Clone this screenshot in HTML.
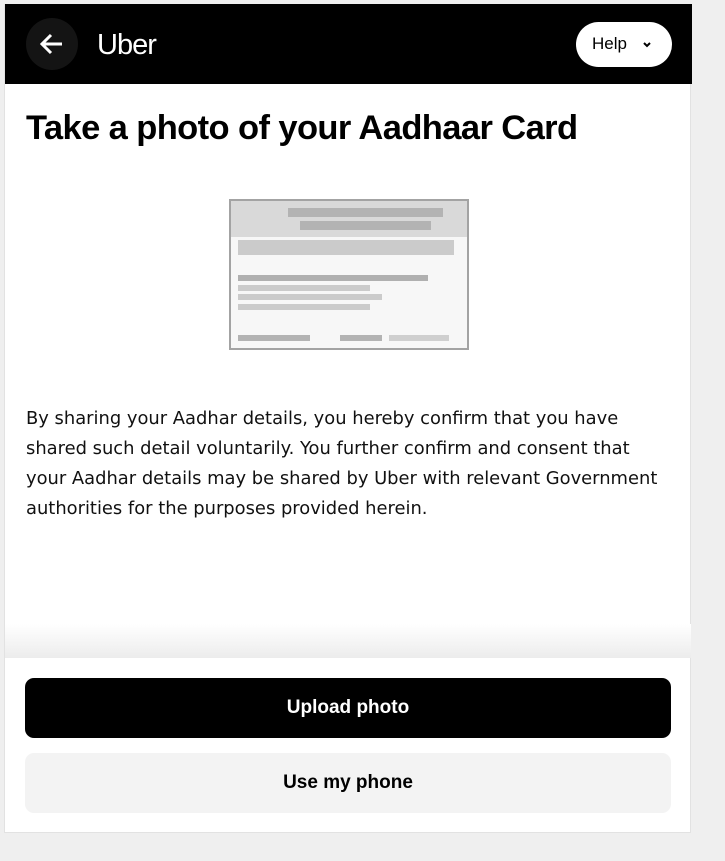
<!DOCTYPE html>
<html><head><meta charset="utf-8"><style>
*{margin:0;padding:0;box-sizing:border-box}
body{width:725px;height:861px;background:#efefef;font-family:"Liberation Sans",sans-serif;position:relative;overflow:hidden}
.wrap{position:absolute;left:4px;top:4px;width:687px;height:829px;background:#fff;border:1px solid #e2e2e2;border-top:none}
.hdr{position:absolute;left:0;top:0;width:687px;height:80px;background:#000}
.back{position:absolute;left:21px;top:14px;width:52px;height:52px;border-radius:50%;background:#141414}
.logo{position:absolute;left:92px;top:25px;color:#fff;font-size:29px;letter-spacing:-1px}
.help{position:absolute;left:571px;top:18px;width:96px;height:45px;border-radius:23px;background:#fff;font-size:17px;color:#000;padding:12px 0 0 16px}
h1{position:absolute;left:21px;top:105px;font-size:34.5px;font-weight:bold;letter-spacing:-0.6px;color:#000}
.p{position:absolute;left:21px;top:400px;width:640px;line-height:30px;color:#111;font-family:"DejaVu Sans","Liberation Sans",sans-serif;font-size:17.9px}
.b{position:absolute}
.shadow{position:absolute;left:0;top:620px;width:686px;height:34px;background:linear-gradient(#fff,#ececec)}
.btn{position:absolute;left:20px;width:646px;height:60px;border-radius:9px;text-align:center;line-height:60px;font-size:19px;font-weight:bold}
</style></head><body>
<div class="wrap">
<div class="hdr">
<div class="back"><svg width="52" height="52" viewBox="0 0 52 52"><path d="M36 26H16M25 17l-9 9 9 9" stroke="#fff" stroke-width="3" fill="none"/></svg></div>
<div class="logo">Uber</div>
<div class="help">Help <svg width="10" height="8" viewBox="0 0 10 8" style="margin-left:10px"><path d="M2 2l3 3 3-3" stroke="#000" stroke-width="2" fill="none"/></svg></div>
</div>
<h1>Take a photo of your Aadhaar Card</h1>
<div class="b" style="left:224px;top:195px;width:240px;height:151px;border:2px solid #a3a3a3;background:#f7f7f7"></div>
<div class="b" style="left:226px;top:197px;width:236px;height:36px;background:#d9d9d9"></div>
<div class="b" style="left:283px;top:204px;width:155px;height:9px;background:#b3b3b3"></div>
<div class="b" style="left:295px;top:217px;width:131px;height:9px;background:#b3b3b3"></div>
<div class="b" style="left:233px;top:236px;width:216px;height:15px;background:#cbcbcb"></div>
<div class="b" style="left:233px;top:271px;width:190px;height:6px;background:#b0b0b0"></div>
<div class="b" style="left:233px;top:281px;width:132px;height:6px;background:#cbcbcb"></div>
<div class="b" style="left:233px;top:290px;width:144px;height:6px;background:#cbcbcb"></div>
<div class="b" style="left:233px;top:300px;width:132px;height:6px;background:#cbcbcb"></div>
<div class="b" style="left:233px;top:331px;width:72px;height:6px;background:#b3b3b3"></div>
<div class="b" style="left:335px;top:331px;width:42px;height:6px;background:#b3b3b3"></div>
<div class="b" style="left:384px;top:331px;width:60px;height:6px;background:#cfcfcf"></div>
<div class="p">By sharing your Aadhar details, you hereby confirm that you have shared such detail voluntarily. You further confirm and consent that your Aadhar details may be shared by Uber with relevant Government authorities for the purposes provided herein.</div>
<div class="shadow"></div>
<div class="btn" style="top:674px;background:#000;color:#fff">Upload photo</div>
<div class="btn" style="top:749px;background:#f3f3f3;color:#000">Use my phone</div>
</div>
</body></html>
